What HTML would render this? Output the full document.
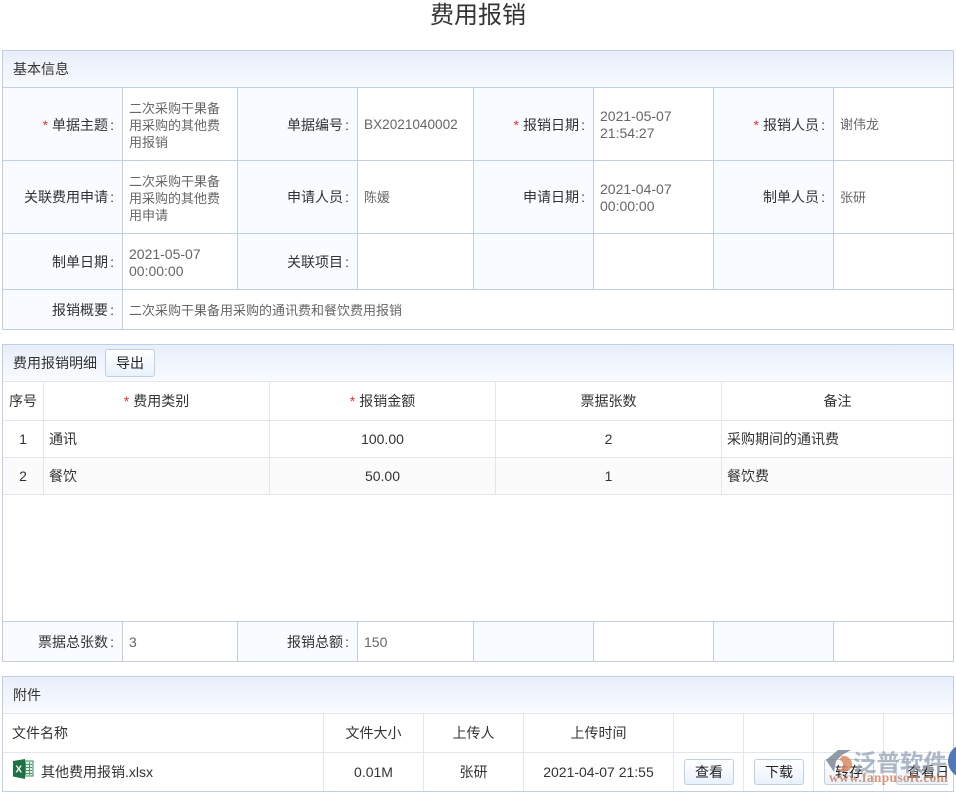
<!DOCTYPE html>
<html lang="zh"><head><meta charset="utf-8"><title>费用报销</title>
<style>
html,body{margin:0;padding:0;background:#fff}
#p{position:relative;width:956px;height:794px;overflow:hidden;font:14px/17px "Liberation Sans","Noto Sans CJK SC",sans-serif;color:#333}
#p div{position:absolute}
.h{height:1px;background:#c2cee2}
.v{width:1px;background:#c2cee2}
.hg{height:1px;background:#e3e6ec}
.vg{width:1px;background:#e3e6ec}
.hd{left:3px;width:950px;height:36px;background:linear-gradient(#e8eefa,#f8fbff)}
.lb{background:#f8fbff}
.t{white-space:nowrap}
.r{text-align:right}
.c{text-align:center}
#p .val{color:#666;font-size:13px}
#p .d{font-size:14px}
.s{color:#f03030;margin-right:4px}
i{font-style:normal;display:inline-block;width:6px;text-align:right}
.b{height:24px;width:48px;box-sizing:border-box;border:1px solid #c2cee2;border-radius:3px;background:linear-gradient(#fff,#e8f2fc);text-align:center;line-height:24px;color:#222}
</style></head><body><div id="p">
<div class="t c" style="left:0;width:956px;top:0;font-size:24px;line-height:31px">费用报销</div>

<!-- section 1 backgrounds -->
<div class="hd" style="top:51px"></div>
<div class="lb" style="left:3px;top:88px;width:119px;height:241px"></div>
<div class="lb" style="left:238px;top:88px;width:119px;height:201px"></div>
<div class="lb" style="left:474px;top:88px;width:119px;height:201px"></div>
<div class="lb" style="left:714px;top:88px;width:119px;height:201px"></div>
<!-- section 1 lines -->
<div class="h" style="left:2px;top:50px;width:952px"></div>
<div class="h" style="left:2px;top:87px;width:952px"></div>
<div class="h" style="left:2px;top:160px;width:952px"></div>
<div class="h" style="left:2px;top:233px;width:952px"></div>
<div class="h" style="left:2px;top:289px;width:952px"></div>
<div class="h" style="left:2px;top:329px;width:952px"></div>
<div class="v" style="left:2px;top:50px;height:280px"></div>
<div class="v" style="left:953px;top:50px;height:280px"></div>
<div class="v" style="left:122px;top:87px;height:243px"></div>
<div class="v" style="left:237px;top:87px;height:203px"></div>
<div class="v" style="left:357px;top:87px;height:203px"></div>
<div class="v" style="left:473px;top:87px;height:203px"></div>
<div class="v" style="left:593px;top:87px;height:203px"></div>
<div class="v" style="left:713px;top:87px;height:203px"></div>
<div class="v" style="left:833px;top:87px;height:203px"></div>

<div class="t" style="left:13px;top:61px">基本信息</div>
<div class="t r" style="right:842px;top:117px"><span class="s">*</span>单据主题<i>:</i></div>
<div class="t val" style="left:129px;top:100px;width:100px;white-space:normal">二次采购干果备用采购的其他费用报销</div>
<div class="t r" style="right:607px;top:117px">单据编号<i>:</i></div>
<div class="t val" style="left:364px;top:116px;font-size:13.6px">BX2021040002</div>
<div class="t r" style="right:371px;top:117px"><span class="s">*</span>报销日期<i>:</i></div>
<div class="t val d" style="left:600px;top:108px">2021-05-07<br>21:54:27</div>
<div class="t r" style="right:131px;top:117px"><span class="s">*</span>报销人员<i>:</i></div>
<div class="t val" style="left:840px;top:116px">谢伟龙</div>

<div class="t r" style="right:842px;top:189px">关联费用申请<i>:</i></div>
<div class="t val" style="left:129px;top:173px;width:100px;white-space:normal">二次采购干果备用采购的其他费用申请</div>
<div class="t r" style="right:607px;top:189px">申请人员<i>:</i></div>
<div class="t val" style="left:364px;top:189px">陈媛</div>
<div class="t r" style="right:371px;top:189px">申请日期<i>:</i></div>
<div class="t val d" style="left:600px;top:181px">2021-04-07<br>00:00:00</div>
<div class="t r" style="right:131px;top:189px">制单人员<i>:</i></div>
<div class="t val" style="left:840px;top:189px">张研</div>

<div class="t r" style="right:842px;top:254px">制单日期<i>:</i></div>
<div class="t val d" style="left:129px;top:246px">2021-05-07<br>00:00:00</div>
<div class="t r" style="right:607px;top:254px">关联项目<i>:</i></div>
<div class="t r" style="right:842px;top:302px">报销概要<i>:</i></div>
<div class="t val" style="left:129px;top:302px">二次采购干果备用采购的通讯费和餐饮费用报销</div>

<!-- section 2 -->
<div class="hd" style="top:345px"></div>
<div style="left:3px;top:458px;width:950px;height:36px;background:#fbfbfb"></div>
<div class="lb" style="left:3px;top:622px;width:119px;height:39px"></div>
<div class="lb" style="left:238px;top:622px;width:119px;height:39px"></div>
<div class="lb" style="left:474px;top:622px;width:119px;height:39px"></div>
<div class="lb" style="left:714px;top:622px;width:119px;height:39px"></div>
<div class="h" style="left:2px;top:344px;width:952px"></div>
<div class="hg" style="left:3px;top:381px;width:950px"></div>
<div class="hg" style="left:3px;top:420px;width:950px"></div>
<div class="hg" style="left:3px;top:457px;width:950px"></div>
<div class="hg" style="left:3px;top:494px;width:950px"></div>
<div class="h" style="left:2px;top:621px;width:952px"></div>
<div class="h" style="left:2px;top:661px;width:952px"></div>
<div class="v" style="left:2px;top:344px;height:318px"></div>
<div class="v" style="left:953px;top:344px;height:318px"></div>
<div class="vg" style="left:43px;top:381px;height:113px"></div>
<div class="vg" style="left:269px;top:381px;height:113px"></div>
<div class="vg" style="left:495px;top:381px;height:113px"></div>
<div class="vg" style="left:721px;top:381px;height:113px"></div>
<div class="v" style="left:122px;top:621px;height:41px"></div>
<div class="v" style="left:237px;top:621px;height:41px"></div>
<div class="v" style="left:357px;top:621px;height:41px"></div>
<div class="v" style="left:473px;top:621px;height:41px"></div>
<div class="v" style="left:593px;top:621px;height:41px"></div>
<div class="v" style="left:713px;top:621px;height:41px"></div>
<div class="v" style="left:833px;top:621px;height:41px"></div>

<div class="t" style="left:13px;top:355px">费用报销明细</div>
<div class="b" style="left:105px;top:349px;width:50px;height:28px;line-height:26px">导出</div>
<div class="t c" style="left:3px;width:40px;top:393px">序号</div>
<div class="t c" style="left:44px;width:225px;top:393px"><span class="s">*</span>费用类别</div>
<div class="t c" style="left:270px;width:225px;top:393px"><span class="s">*</span>报销金额</div>
<div class="t c" style="left:496px;width:225px;top:393px">票据张数</div>
<div class="t c" style="left:722px;width:231px;top:393px">备注</div>
<div class="t c" style="left:3px;width:40px;top:431px">1</div>
<div class="t" style="left:49px;top:431px">通讯</div>
<div class="t c" style="left:270px;width:225px;top:431px">100.00</div>
<div class="t c" style="left:496px;width:225px;top:431px">2</div>
<div class="t" style="left:727px;top:431px">采购期间的通讯费</div>
<div class="t c" style="left:3px;width:40px;top:468px">2</div>
<div class="t" style="left:49px;top:468px">餐饮</div>
<div class="t c" style="left:270px;width:225px;top:468px">50.00</div>
<div class="t c" style="left:496px;width:225px;top:468px">1</div>
<div class="t" style="left:727px;top:468px">餐饮费</div>
<div class="t r" style="right:842px;top:634px">票据总张数<i>:</i></div>
<div class="t val d" style="left:129px;top:634px">3</div>
<div class="t r" style="right:607px;top:634px">报销总额<i>:</i></div>
<div class="t val d" style="left:364px;top:634px">150</div>

<!-- section 3 -->
<div class="hd" style="top:677px"></div>
<div class="h" style="left:2px;top:676px;width:952px"></div>
<div class="hg" style="left:3px;top:713px;width:950px"></div>
<div class="hg" style="left:3px;top:752px;width:950px"></div>
<div class="h" style="left:2px;top:791px;width:952px"></div>
<div class="v" style="left:2px;top:676px;height:116px"></div>
<div class="v" style="left:953px;top:676px;height:116px"></div>
<div class="vg" style="left:323px;top:713px;height:78px"></div>
<div class="vg" style="left:423px;top:713px;height:78px"></div>
<div class="vg" style="left:523px;top:713px;height:78px"></div>
<div class="vg" style="left:673px;top:713px;height:78px"></div>
<div class="vg" style="left:743px;top:713px;height:78px"></div>
<div class="vg" style="left:813px;top:713px;height:78px"></div>
<div class="vg" style="left:883px;top:713px;height:78px"></div>

<div class="t" style="left:13px;top:687px">附件</div>
<div class="t" style="left:12px;top:725px">文件名称</div>
<div class="t c" style="left:324px;width:99px;top:725px">文件大小</div>
<div class="t c" style="left:424px;width:99px;top:725px">上传人</div>
<div class="t c" style="left:524px;width:149px;top:725px">上传时间</div>
<svg style="position:absolute;left:13px;top:759px" width="21" height="20" viewBox="0 0 21 20">
<rect x="8" y="2" width="12" height="15" fill="#e4efe8" stroke="#3f8a62"/>
<path d="M12.5 3v13M16.5 3v13M9 5.5h10M9 8.5h10M9 11.5h10M9 14.5h10" stroke="#4f9570" stroke-width="1"/>
<path d="M0 2 12 0v20L0 17.5z" fill="#1f7145"/>
<text x="2.4" y="13.5" font-family="Liberation Sans" font-size="10" font-weight="700" fill="#fff">X</text>
</svg>
<div class="t" style="left:41px;top:764px">其他费用报销.xlsx</div>
<div class="t c" style="left:324px;width:99px;top:764px">0.01M</div>
<div class="t c" style="left:424px;width:99px;top:764px">张研</div>
<div class="t c" style="left:524px;width:149px;top:764px">2021-04-07 21:55</div>
<div class="b" style="left:684px;top:759px;width:50px;height:26px">查看</div>
<div class="b" style="left:754px;top:759px;width:50px;height:26px">下载</div>
<div class="b" style="left:824px;top:759px;width:50px;height:26px">转存</div>
<div class="b" style="left:896px;top:759px;width:52px;height:26px;border-right:0;border-radius:3px 0 0 3px;overflow:hidden;white-space:nowrap;text-align:left;padding-left:10px">查看日</div>

<!-- watermark -->
<svg style="position:absolute;left:826px;top:749px" width="30" height="26" viewBox="0 0 30 26">
<path d="M12 1h13l-9 5-6 6-2 11L0 11z" fill="#7c8798" opacity=".85"/>
<path d="M16 7a8.5 8.5 0 0 1 10 8c0 5-4 8-9 8-3 0-5-1-6-2 3 0 6-1 6-5 0-3-2-5-4-5z" fill="#d98a63" opacity=".85"/>
</svg>
<div class="t" style="left:853px;top:748px;font-size:23.5px;line-height:30px;font-weight:700;color:#9aa6b8;opacity:.8">泛普软件</div>
<div class="t" style="left:829px;top:770px;font:700 13.5px/16px 'Liberation Serif',serif;color:#c9714a;opacity:.72;letter-spacing:.3px">www.fanpusoft.com</div>
<div style="left:948px;top:744px;width:34px;height:34px;border-radius:50%;background:#5378b8"></div>
</div></body></html>
